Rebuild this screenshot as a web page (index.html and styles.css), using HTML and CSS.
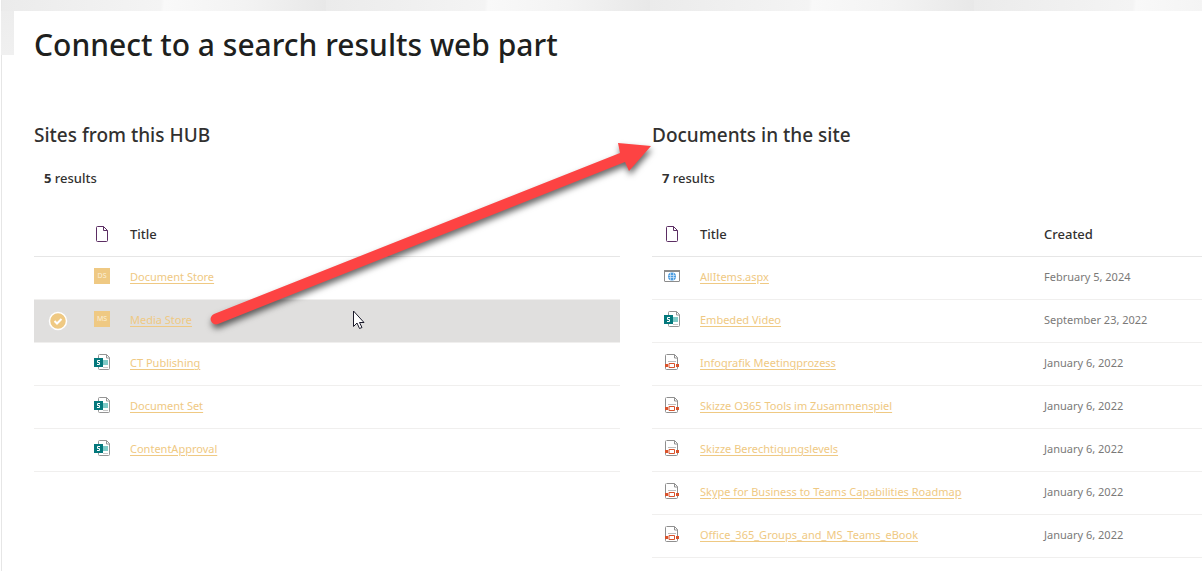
FILE: index.html
```html
<!DOCTYPE html>
<html lang="en">
<head>
<meta charset="utf-8">
<title>Connect to a search results web part</title>
<link rel="stylesheet" href="styles.css">
</head>
<body>
<svg class="defs" aria-hidden="true">
  <symbol id="page" viewBox="0 0 16 16"><path d="M3.500.5h6l4 4v10q0 1-1 1h-9q-1 0-1-1v-13q0-1 1-1zM9.500.5v4h4" fill="#fff" stroke="#5b2d63"/></symbol>
  <symbol id="site" viewBox="0 0 16 16">
    <path d="M5.500.5h7l3 3v11q0 1-1 1h-9q-1 0-1-1V1.500q0-1 1-1M12.500.5v3.500h3" fill="#fff" stroke="#959595"/>
    <path d="M9 6h5v5H9z" fill="#7fcac7"/><path d="M9 13.500h5" stroke="#c8c8c8"/>
    <path d="M0 4h9v9H0z" fill="#03787c"/><path d="M6 6.500H3.500v2h2v2H3" fill="none" stroke="#fff"/>
  </symbol>
  <symbol id="pdf" viewBox="0 0 16 16">
    <path d="M3 .5h7.500l3 3v11q0 1-1 1H2.500q-1 0-1-1V1.500q0-1 1-1M10.500.5v3.500h3" fill="#fff" stroke="#8f8f8f"/><path d="M4 7.500h8" stroke="#bdbdbd"/>
    <path d="M1 10h3v3H1zM12 10h3v3h-3z" fill="#d9532c"/><path d="M5 9.500h5.500v4H5z" fill="#fff" stroke="#d9532c"/>
  </symbol>
  <symbol id="web" viewBox="0 0 16 16">
    <rect x=".5" y="2.500" width="15" height="11" rx=".5" fill="#fff" stroke="#8c8c8c"/><path d="M0 3h16" stroke="#8c8c8c" stroke-width="2"/>
    <circle cx="8" cy="8.500" r="4" fill="#4c9de0"/><path d="M4.500 7.500h7M4.500 9.500h7M6.500 5v7M9.500 5v7" stroke="#d7eafa" stroke-width=".7"/>
  </symbol>
</svg>
<main class="page">
  <h1 class="page-title">Connect to a search results web part</h1>
  <div class="columns">
    <section>
      <h2 class="heading">Sites from this HUB</h2>
      <p class="count"><b>5</b> results</p>
      <table class="list">
        <thead><tr><th class="select"></th><th class="type"><svg class="icon"><use href="#page"/></svg></th><th>Title</th></tr></thead>
        <tbody>
          <tr><td></td><td><span class="initials">DS</span></td><td><a href="#">Document Store</a></td></tr>
          <tr class="selected"><td><svg class="check" viewBox="0 0 20 20"><circle cx="10" cy="10" r="8.500" fill="#efc983" stroke="#fff" stroke-width="1.500"/><path d="M6.500 10l2.500 2.500 4.500-4.500" fill="none" stroke="#fff" stroke-width="2"/></svg></td><td><span class="initials">MS</span></td><td><a href="#">Media Store</a></td></tr>
          <tr><td></td><td><svg class="icon"><use href="#site"/></svg></td><td><a href="#">CT Publishing</a></td></tr>
          <tr><td></td><td><svg class="icon"><use href="#site"/></svg></td><td><a href="#">Document Set</a></td></tr>
          <tr><td></td><td><svg class="icon"><use href="#site"/></svg></td><td><a href="#">ContentApproval</a></td></tr>
        </tbody>
      </table>
    </section>
    <section>
      <h2 class="heading">Documents in the site</h2>
      <p class="count"><b>7</b> results</p>
      <table class="list documents">
        <thead><tr><th class="type"><svg class="icon"><use href="#page"/></svg></th><th>Title</th><th class="created">Created</th></tr></thead>
        <tbody>
          <tr><td><svg class="icon"><use href="#web"/></svg></td><td><a href="#">AllItems.aspx</a></td><td>February 5, 2024</td></tr>
          <tr><td><svg class="icon"><use href="#site"/></svg></td><td><a href="#">Embeded Video</a></td><td>September 23, 2022</td></tr>
          <tr><td><svg class="icon"><use href="#pdf"/></svg></td><td><a href="#">Infografik Meetingprozess</a></td><td>January 6, 2022</td></tr>
          <tr><td><svg class="icon"><use href="#pdf"/></svg></td><td><a href="#">Skizze O365 Tools im Zusammenspiel</a></td><td>January 6, 2022</td></tr>
          <tr><td><svg class="icon"><use href="#pdf"/></svg></td><td><a href="#">Skizze Berechtigungslevels</a></td><td>January 6, 2022</td></tr>
          <tr><td><svg class="icon"><use href="#pdf"/></svg></td><td><a href="#">Skype for Business to Teams Capabilities Roadmap</a></td><td>January 6, 2022</td></tr>
          <tr><td><svg class="icon"><use href="#pdf"/></svg></td><td><a href="#">Office_365_Groups_and_MS_Teams_eBook</a></td><td>January 6, 2022</td></tr>
        </tbody>
      </table>
    </section>
  </div>
</main>
<svg class="arrow" viewBox="0 0 460 210" aria-hidden="true">
  <path d="M14 184L420 23 418 13 451 16 429 41 425 32 18 194A5.300 5.300 0 0 1 14 184z" fill="#fd4343"/>
</svg>
<svg class="cursor" viewBox="0 0 14 20" aria-hidden="true"><path d="M1.500 1v15.500l3.500-3.500 2.500 5.500 2.500-1-2.500-5H12z" fill="#fff" stroke="#1b1b2b"/></svg>
</body>
</html>
```
FILE: styles.css
```css
* { box-sizing: border-box; }
body {
  margin: 0;
  padding: 11px 0 0 14px;
  min-height: 100vh;
  font-family: "Noto Sans", "Open Sans", sans-serif;
  font-size: 11px;
  color: #323130;
  background:
    linear-gradient(#fff, #fff) 0 0 / 1px 100% no-repeat,
    linear-gradient(#e6e6e6, #e6e6e6) 1px 55px / 1px 100% no-repeat,
    linear-gradient(#ededed, #f0f0f0) 0 11px / 14px 44px no-repeat,
    linear-gradient(95deg, #ebebeb, #f4f4f4 49%, #f9f9f9 50%, #f3f3f3 75%, #e8e8e8) 2px 0 / 324px 11px repeat-x,
    #fff;
}
.defs { display: none; }
.page { padding: 10px 0 13px 20px; background: #fff; }
.page-title { margin: 0; font-size: 30px; line-height: 48px; font-weight: 500; color: #201f1e; }
.columns { display: grid; grid-template-columns: 586fr 550fr; gap: 32px; padding-top: 52px; }
.heading { margin: 0; font-size: 19px; line-height: 28px; font-weight: 500; }
.count { margin: 19px 0 25px 10px; font-size: 13px; line-height: 20px; font-weight: 500; }
.list { width: 100%; table-layout: fixed; border-collapse: separate; border-spacing: 0; }
.list th, .list td { height: 43px; padding: 0 0 3px; border-bottom: 1px solid #f0efee; text-align: left; vertical-align: middle; }
.list th { height: 44px; padding-bottom: 2px; font-size: 13px; font-weight: 500; border-color: #e6e6e6; }
.list td { color: #7a7978; }
.list .select { width: 60px; }
.list .type { width: 36px; }
.documents .type { width: 48px; }
.documents th:first-child, .documents td:first-child { padding-left: 12px; }
.list .created { width: 158px; }
.list a { color: #efc983; text-decoration: underline; text-underline-offset: 2px; }
.icon { display: block; width: 16px; height: 16px; }
td .icon, .initials { margin-bottom: 2px; }
.check { display: block; width: 20px; height: 20px; margin-left: 14px; }
.initials { display: block; width: 16px; height: 16px; background: #efc983; color: #fbefd8; font-size: 7px; line-height: 16px; text-align: center; }
.selected td { background: #e0dfde; }
.selected td:first-child { padding-bottom: 0; }
.arrow, .cursor { position: absolute; overflow: visible; pointer-events: none; }
.arrow { left: 200px; top: 130px; width: 460px; height: 210px; filter: drop-shadow(1px 4px 3px #0009); }
.cursor { left: 352px; top: 310px; width: 14px; height: 20px; }
```
